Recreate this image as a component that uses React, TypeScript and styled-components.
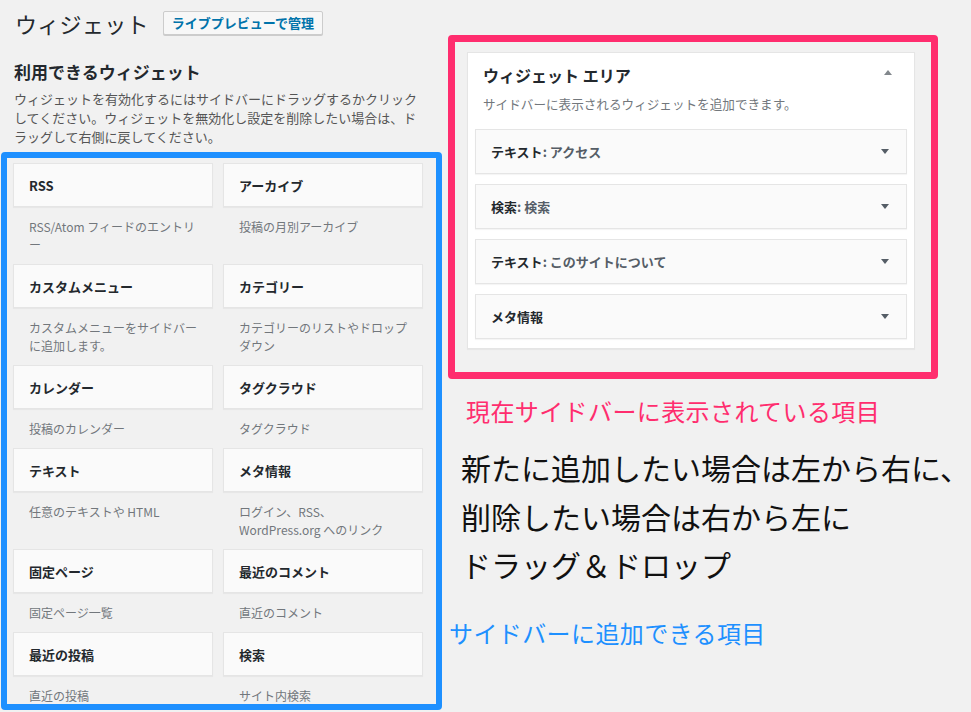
import React, { FC } from "react";
import styled, { createGlobalStyle } from "styled-components";

const FONT = `"Noto Sans CJK JP", "Noto Sans", "Liberation Sans", sans-serif`;

interface WidgetInfo {
  title: string;
  description: string;
}

const availableWidgets: WidgetInfo[] = [
  { title: "RSS", description: "RSS/Atom フィードのエントリー" },
  { title: "アーカイブ", description: "投稿の月別アーカイブ" },
  { title: "カスタムメニュー", description: "カスタムメニューをサイドバーに追加します。" },
  { title: "カテゴリー", description: "カテゴリーのリストやドロップダウン" },
  { title: "カレンダー", description: "投稿のカレンダー" },
  { title: "タグクラウド", description: "タグクラウド" },
  { title: "テキスト", description: "任意のテキストや HTML" },
  { title: "メタ情報", description: "ログイン、RSS、WordPress.org へのリンク" },
  { title: "固定ページ", description: "固定ページ一覧" },
  { title: "最近のコメント", description: "直近のコメント" },
  { title: "最近の投稿", description: "直近の投稿" },
  { title: "検索", description: "サイト内検索" },
];

interface SidebarWidget {
  type: string;
  name?: string;
}

const sidebarWidgets: SidebarWidget[] = [
  { type: "テキスト", name: "アクセス" },
  { type: "検索", name: "検索" },
  { type: "テキスト", name: "このサイトについて" },
  { type: "メタ情報" },
];

const Arrow: FC<{ up?: boolean; color: string }> = ({ up, color }) => (
  <ArrowSvg width="8" height="5" viewBox="0 0 8 5">
    <polygon points={up ? "0,5 8,5 4,0" : "0,0 8,0 4,5"} fill={color} />
  </ArrowSvg>
);

export default function App() {
  return (
    <>
      <GlobalStyle />
      <Page>
        <LeftColumn>
          <TitleRow>
            <PageTitle>ウィジェット</PageTitle>
            <PreviewButton>ライブプレビューで管理</PreviewButton>
          </TitleRow>
          <SectionHeading>利用できるウィジェット</SectionHeading>
          <SectionDescription>
            ウィジェットを有効化するにはサイドバーにドラッグするかクリックしてください。ウィジェットを無効化し設定を削除したい場合は、ドラッグして右側に戻してください。
          </SectionDescription>
          <BlueFrame>
            <WidgetGrid>
              {availableWidgets.map((w) => (
                <WidgetCell key={w.title}>
                  <WidgetCard>{w.title}</WidgetCard>
                  <WidgetDescription>{w.description}</WidgetDescription>
                </WidgetCell>
              ))}
            </WidgetGrid>
          </BlueFrame>
        </LeftColumn>

        <RightColumn>
          <PinkFrame>
            <AreaPanel>
              <AreaHeader>
                <AreaTitle>ウィジェット エリア</AreaTitle>
                <HeaderArrow>
                  <Arrow up color="#82878c" />
                </HeaderArrow>
              </AreaHeader>
              <AreaDescription>
                サイドバーに表示されるウィジェットを追加できます。
              </AreaDescription>
              <RowList>
                {sidebarWidgets.map((w, i) => (
                  <SidebarRow key={i}>
                    <RowLabel>
                      {w.type}
                      {w.name && <RowName>: {w.name}</RowName>}
                    </RowLabel>
                    <Arrow color="#555d66" />
                  </SidebarRow>
                ))}
              </RowList>
            </AreaPanel>
          </PinkFrame>

          <PinkNote>現在サイドバーに表示されている項目</PinkNote>
          <BlackNote>
            新たに追加したい場合は左から右に、
            <br />
            削除したい場合は右から左に
            <br />
            ドラッグ＆ドロップ
          </BlackNote>
          <BlueNote>サイドバーに追加できる項目</BlueNote>
        </RightColumn>
      </Page>
    </>
  );
}

const GlobalStyle = createGlobalStyle`
  html, body {
    margin: 0;
    padding: 0;
    background: #f1f1f1;
    overflow: hidden;
  }
  body {
    font-family: ${FONT};
    color: #23282d;
  }
  * {
    box-sizing: border-box;
  }
`;

const Page = styled.div`
  display: flex;
  width: 971px;
  height: 712px;
`;

const LeftColumn = styled.div`
  width: 448px;
  flex-shrink: 0;
  display: flex;
  flex-direction: column;
`;

const TitleRow = styled.div`
  display: flex;
  align-items: center;
  gap: 14px;
  height: 35px;
  padding: 11px 0 0 15px;
`;

const PageTitle = styled.h1`
  margin: 0;
  font-size: 22px;
  line-height: 24px;
  font-weight: 400;
  letter-spacing: 0.3px;
  color: #23282d;
`;

const PreviewButton = styled.button`
  height: 24px;
  padding: 0 8px;
  border: 1px solid #ccc;
  border-radius: 2px;
  background: #f7f7f7;
  color: #0073aa;
  font-family: ${FONT};
  font-size: 13px;
  font-weight: 600;
  line-height: 22px;
  box-shadow: 0 1px 0 #ccc;
`;

const SectionHeading = styled.h2`
  margin: 25px 0 0 14px;
  font-size: 17px;
  line-height: 24px;
  font-weight: 700;
  color: #23282d;
`;

const SectionDescription = styled.p`
  margin: 5px 0 0 14px;
  width: 412px;
  font-size: 13px;
  line-height: 19px;
  color: #555;
`;

const BlueFrame = styled.div`
  margin: 6px 0 0 1px;
  width: 441px;
  height: 558px;
  border: 6px solid #1e90ff;
  border-radius: 4px;
  padding: 5px 12px 0 6px;
  overflow: hidden;
`;

const WidgetGrid = styled.div`
  display: grid;
  grid-template-columns: repeat(2, 200px);
  column-gap: 10px;
`;

const WidgetCell = styled.div`
  display: flex;
  flex-direction: column;
`;

const WidgetCard = styled.div`
  height: 44px;
  display: flex;
  align-items: center;
  padding: 0 15px;
  background: #fafafa;
  border: 1px solid #e5e5e5;
  box-shadow: 0 1px 1px rgba(0, 0, 0, 0.04);
  font-size: 13px;
  font-weight: 700;
  color: #23282d;
`;

const WidgetDescription = styled.div`
  padding: 11px 16px 10px;
  font-size: 12px;
  line-height: 18px;
  color: #72777c;
`;

const RightColumn = styled.div`
  flex: 1;
  padding-top: 35px;
  display: flex;
  flex-direction: column;
`;

const PinkFrame = styled.div`
  width: 490px;
  border: 7px solid #ff2d6e;
  border-radius: 4px;
  padding: 10px 16px 23px 12px;
`;

const AreaPanel = styled.div`
  background: #fff;
  border: 1px solid #e5e5e5;
  box-shadow: 0 1px 1px rgba(0, 0, 0, 0.04);
  padding: 0 7px 9px;
`;

const AreaHeader = styled.div`
  display: flex;
  justify-content: space-between;
  align-items: flex-start;
  padding: 11px 15px 0 8px;
`;

const AreaTitle = styled.h3`
  margin: 0;
  font-size: 16px;
  line-height: 22px;
  font-weight: 700;
  color: #23282d;
`;

const HeaderArrow = styled.span`
  display: flex;
  margin-top: 6px;
`;

const ArrowSvg = styled.svg`
  display: block;
  flex-shrink: 0;
`;

const AreaDescription = styled.p`
  margin: 9px 0 0 8px;
  font-size: 12.6px;
  line-height: 18px;
  color: #72777c;
`;

const RowList = styled.div`
  margin-top: 16px;
  display: flex;
  flex-direction: column;
  gap: 10px;
`;

const SidebarRow = styled.div`
  height: 45px;
  display: flex;
  align-items: center;
  justify-content: space-between;
  padding: 0 17px 0 15px;
  background: #fafafa;
  border: 1px solid #e5e5e5;
  box-shadow: 0 1px 1px rgba(0, 0, 0, 0.04);
`;

const RowLabel = styled.span`
  font-size: 13px;
  font-weight: 700;
  color: #23282d;
`;

const RowName = styled.span`
  font-weight: 600;
  color: #555d66;
`;

const PinkNote = styled.div`
  margin: 16px 0 0 18px;
  font-size: 24px;
  line-height: 32px;
  letter-spacing: 0.4px;
  color: #ff2d6e;
  white-space: nowrap;
`;

const BlackNote = styled.div`
  margin: 16px 0 0 13px;
  font-size: 30px;
  line-height: 48.5px;
  color: #111;
  white-space: nowrap;
`;

const BlueNote = styled.div`
  margin: 28px 0 0 1px;
  font-size: 24px;
  line-height: 32px;
  letter-spacing: 0.4px;
  color: #1e90ff;
  white-space: nowrap;
`;
